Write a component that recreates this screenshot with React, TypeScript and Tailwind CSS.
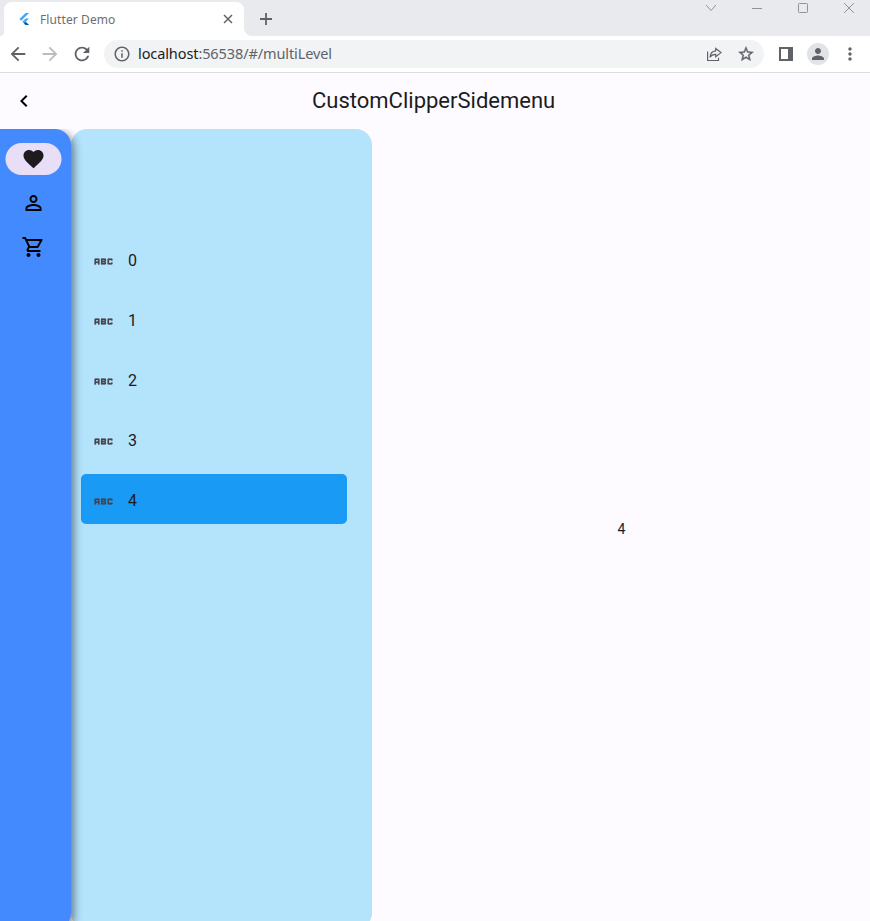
import React from "react";
import {
  MdAbc,
  MdChevronLeft,
  MdFavorite,
  MdPersonOutline,
  MdOutlineShoppingCart,
  MdPerson,
  MdStarOutline,
  MdArrowBack,
  MdArrowForward,
  MdRefresh,
  MdInfoOutline,
  MdMoreVert,
} from "react-icons/md";

const items = ["0", "1", "2", "3", "4"];

function FlutterLogo() {
  return (
    <svg width="16" height="16" viewBox="0 0 16 16">
      <path d="M9.6 2H13L5.2 9.8 3.5 8z" fill="#42a5f5" />
      <path d="M9.6 7.4H13L9.6 10.8 13 14H9.6L6.3 10.8z" fill="#42a5f5" />
      <path d="M8 12.4l1.6-1.6L13 14H9.6z" fill="#0d5aa7" />
    </svg>
  );
}

function TabStrip() {
  return (
    <div className="flex h-9 shrink-0 items-start bg-[#e8eaed]">
      <div className="flex h-9 w-1 items-end bg-white">
        <div className="h-9 w-1 rounded-br-[6px] bg-[#e8eaed]" />
      </div>
      <div className="mt-[2px] flex h-[34px] w-60 items-center rounded-t-lg bg-white pl-[12px] pr-[10px]">
        <FlutterLogo />
        <span className="ml-2 flex-1 whitespace-nowrap pt-[2px] font-['Noto_Sans',sans-serif] text-[12px] tracking-[0.1px] text-[#6b6e72]">
          Flutter Demo
        </span>
        <svg width="12" height="12" viewBox="0 0 12 12" stroke="#5f6368" strokeWidth="1.5">
          <path d="M2 2l8 8M10 2l-8 8" />
        </svg>
      </div>
      <div className="h-9 w-2 bg-white">
        <div className="h-9 w-2 rounded-bl-lg bg-[#e8eaed]" />
      </div>
      <svg className="ml-[7px] mt-[12px]" width="14" height="14" viewBox="0 0 14 14" stroke="#5f6368" strokeWidth="1.8">
        <path d="M7 1v12M1 7h12" />
      </svg>
      <svg
        className="ml-auto"
        width="170"
        height="16"
        viewBox="0 0 170 16"
        fill="none"
        stroke="#929195"
        strokeWidth="1"
      >
        <path d="M6 5l5 5.5L16 5" />
        <path d="M52 8.5h10" />
        <rect x="98.5" y="3.500" width="9" height="9" rx="0.8" />
        <path d="M144 3l10 10M154 3l-10 10" />
      </svg>
    </div>
  );
}

function Toolbar() {
  return (
    <div className="flex h-[37px] shrink-0 items-center border-b border-[#dadce0] bg-white text-[#5f6368]">
      <MdArrowBack className="ml-[7px]" size={22} />
      <MdArrowForward className="ml-[10px] text-[#bdbcba]" size={22} />
      <MdRefresh className="ml-[10px]" size={22} />
      <div className="ml-[11px] flex h-7 w-[660px] items-center rounded-full bg-[#f1f3f4] pl-[9px] pr-[9px]">
        <MdInfoOutline size={18} />
        <span className="ml-[7px] flex-1 whitespace-nowrap font-['Noto_Sans',sans-serif] text-[14.5px] tracking-[-0.1px] text-[#5f6368]">
          <span className="text-[#202124]">localhost</span>:56538/#/multiLevel
        </span>
        <svg className="mr-[14px]" width="18" height="18" viewBox="0 0 18 18" fill="none" stroke="#5f6368" strokeWidth="1.2">
          <path d="M2.600 6.500V15.500H13.500V12.700" />
          <path d="M10.700 3.500L16 7.600 10.700 11.700V9.400C8 9.300 6.300 10.200 5 12.300 5.200 8.700 7.300 6.200 10.700 5.800z" />
        </svg>
        <MdStarOutline
          className="[&>path[fill=none]]:stroke-none"
          size={18}
          stroke="currentColor"
          strokeWidth={0.5}
        />
      </div>
      <svg className="ml-[15px]" width="14" height="14" viewBox="0 0 14 14">
        <path d="M0 0h14v14H0zM2 2v10h7V2z" fill="#5f6368" fillRule="evenodd" />
      </svg>
      <div className="ml-[14px] flex size-[22px] items-center justify-center rounded-full bg-[#e1e3e6]">
        <MdPerson size={18} />
      </div>
      <MdMoreVert className="ml-[11px]" size={20} />
    </div>
  );
}

export default function App() {
  return (
    <div className="flex h-[921px] w-[870px] flex-col overflow-hidden bg-[#fdfbff] font-[Roboto,sans-serif] text-[#1c1b1f]">
      <TabStrip />
      <Toolbar />
      <header className="grid h-14 shrink-0 grid-cols-[312px_1fr] items-center">
        <MdChevronLeft className="ml-3 text-black" size={24} />
        <h1 className="text-[22px] leading-7">CustomClipperSidemenu</h1>
      </header>
      <main className="flex h-[800px] shrink-0 overflow-hidden">
        <nav className="z-10 flex w-[71px] flex-col items-center rounded-r-[16px] bg-[#448aff] pr-[5px] pt-[14px] text-black shadow-[3px_3px_8px_0px_rgba(0,0,0,0.45)]">
          <div className="flex h-8 w-14 translate-x-[0.5px] items-center justify-center rounded-full bg-[#e8def8]">
            <MdFavorite className="text-[#1d1b1e]" size={24} />
          </div>
          <MdPersonOutline className="mt-4 translate-x-[0.5px]" size={24} />
          <MdOutlineShoppingCart className="mt-5 translate-x-[0.5px]" size={24} />
        </nav>
        <aside className="flex w-[301px] flex-col gap-[10px] rounded-[16px] bg-[#b4e3fc] pl-[10px] pr-[25px] pt-[105px]">
          {items.map((item) => (
            <div
              key={item}
              className={
                item === "4"
                  ? "flex h-[50px] items-center rounded-[5px] bg-[#199af5] pl-[10px] pt-[3px]"
                  : "flex h-[50px] items-center pl-[10px] pt-[3px]"
              }
            >
              <MdAbc
                className="translate-x-[0.5px] translate-y-[0.5px] text-[#49454f] [&>path[fill=none]]:stroke-none"
                size={24}
                stroke="currentColor"
                strokeWidth={0.2}
              />
              <span className="ml-[13px] text-[16px] leading-6">{item}</span>
            </div>
          ))}
        </aside>
        <section className="flex flex-1 items-center justify-center pl-px text-[14px] leading-5">4</section>
      </main>
    </div>
  );
}
